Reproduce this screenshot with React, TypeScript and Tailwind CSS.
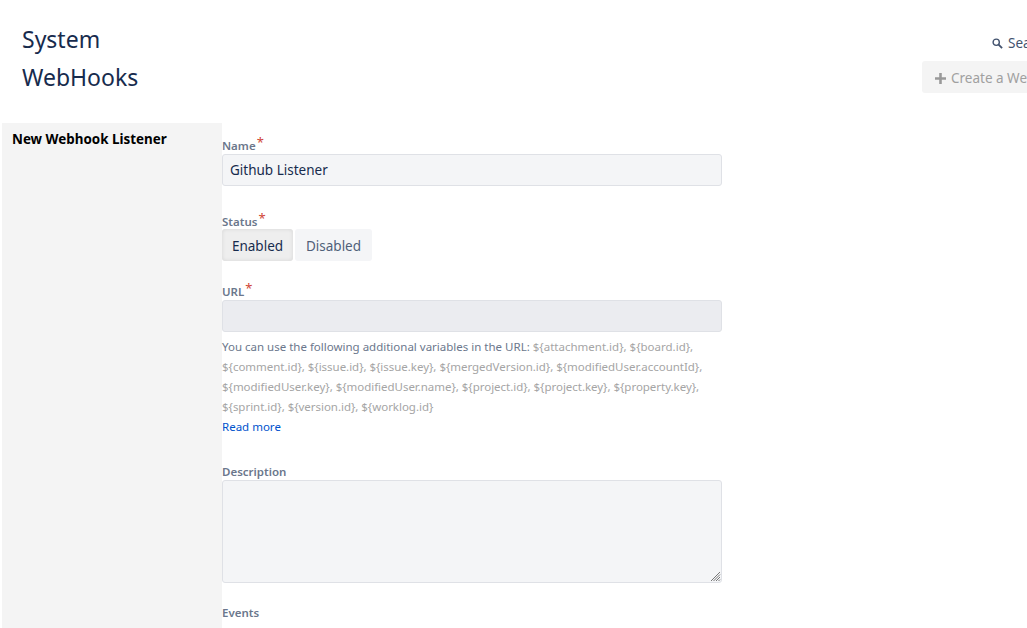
const font = { fontFamily: '"Noto Sans", sans-serif' }

const variableLines = [
  "${comment.id}, ${issue.id}, ${issue.key}, ${mergedVersion.id}, ${modifiedUser.accountId},",
  "${modifiedUser.key}, ${modifiedUser.name}, ${project.id}, ${project.key}, ${property.key},",
  "${sprint.id}, ${version.id}, ${worklog.id}",
]

function Label({ text, required }: { text: string; required?: boolean }) {
  return (
    <div className="flex h-[20px] items-end text-[11.5px] font-semibold leading-[16px] text-[#6b778c]">
      <span>{text}</span>
      {required && <span className="mb-[6px] ml-[1px] text-[13px] font-normal leading-[12px] text-[#d04437]">*</span>}
    </div>
  )
}

export default function App() {
  return (
    <div className="h-[628px] w-[1027px] overflow-hidden bg-white" style={font}>
      <header className="flex h-[123px] pl-[22px]">
        <h1 className="mt-[20px] w-[130px] text-[23px] leading-[38px] text-[#172b4d]">System WebHooks</h1>
        <div className="ml-[770px] w-[105px] shrink-0 whitespace-nowrap pt-[33px]">
          <div className="ml-[70px] flex h-[20px] items-center gap-[5px] text-[13.5px] text-[#42526e]">
            <svg className="shrink-0" width="11" height="11" viewBox="0 0 12 12" fill="none" stroke="#42526e" strokeWidth="1.5">
              <circle cx="4.6" cy="4.6" r="3.4" />
              <path d="M7.2 7.2 11 11" strokeWidth="2" />
            </svg>
            Search
          </div>
          <div className="mt-[8px] flex h-[32px] w-[160px] items-center gap-[5px] rounded-[3px] bg-[#f4f4f4] pl-[13px] pt-[2px] text-[13.5px] text-[#a0a0a0]">
            <svg className="shrink-0" width="11" height="11" viewBox="0 0 12 12" fill="#999999">
              <path d="M4.6 0h2.8v4.6H12v2.8H7.4V12H4.6V7.4H0V4.6h4.6z" />
            </svg>
            Create a Webhook
          </div>
        </div>
      </header>

      <div className="flex h-[505px] pl-[2px]">
        <aside className="w-[220px] bg-[#f4f4f4] pl-[10px] pt-[7px] text-[13.4px] font-bold leading-[18px] text-black">
          New Webhook Listener
        </aside>

        <form className="w-[500px] pt-[11px]">
          <Label text="Name" required />
          <div className="flex h-[32px] items-center rounded-[3px] border border-[#dfe1e6] bg-[#f4f5f7] pl-[7px] text-[13.5px] text-[#172b4d]">
            Github Listener
          </div>

          <div className="mt-[24px]">
            <Label text="Status" required />
          </div>
          <div className="mt-[-1px] flex gap-[2px] text-[13.5px]">
            <div className="flex h-[32px] w-[71px] items-center justify-center rounded-[3px] bg-[#eeeeee] pt-[2px] text-[#172b4d] shadow-[inset_0_0_4px_rgba(0,0,0,0.1)]">
              Enabled
            </div>
            <div className="flex h-[32px] w-[77px] items-center justify-center rounded-[3px] bg-[#f4f5f7] pt-[2px] text-[#505f79]">
              Disabled
            </div>
          </div>

          <div className="mt-[19px]">
            <Label text="URL" required />
          </div>
          <div className="h-[32px] rounded-[3px] border border-[#dfe1e6] bg-[#ebecf0]" />
          <div className="mt-[5px] whitespace-nowrap text-[11.5px] leading-[20px] text-[#6b778c]">
            <div>
              You can use the following additional variables in the URL:{" "}
              <span className="text-[#a5a5a5]">{"${attachment.id}, ${board.id},"}</span>
            </div>
            {variableLines.map((line) => (
              <div key={line} className="tracking-[-0.03px] text-[#a5a5a5]">
                {line}
              </div>
            ))}
          </div>
          <a className="block text-[11.5px] leading-[20px] text-[#0052cc]">Read more</a>

          <div className="mt-[23px]">
            <Label text="Description" />
          </div>
          <div className="relative h-[103px] rounded-[3px] border border-[#dfe1e6] bg-[#f4f5f7]">
            <svg className="absolute bottom-0 right-0" width="11" height="11" viewBox="0 0 11 11" stroke="#777" strokeWidth="1">
              <path d="M10 1 1 10M10 3.5 3.5 10M10 6 6 10M10 8.5 8.5 10" />
            </svg>
          </div>

          <div className="mt-[18px]">
            <Label text="Events" />
          </div>
        </form>
      </div>
    </div>
  )
}
